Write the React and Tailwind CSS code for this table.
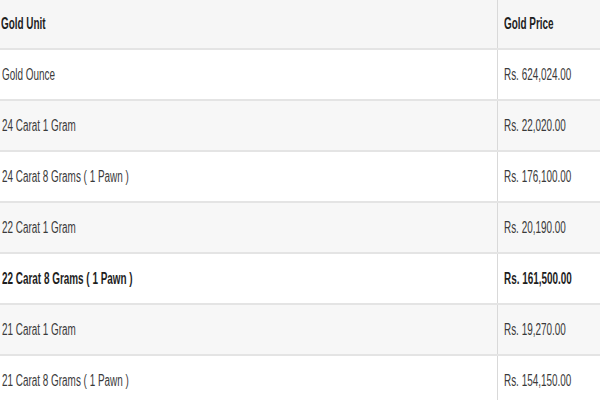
import React from "react";

const rows = [
  { unit: "Gold Ounce", price: "Rs. 624,024.00", bg: "bg-white" },
  { unit: "24 Carat 1 Gram", price: "Rs. 22,020.00", bg: "bg-[#f7f7f7]" },
  { unit: "24 Carat 8 Grams ( 1 Pawn )", price: "Rs. 176,100.00", bg: "bg-white" },
  { unit: "22 Carat 1 Gram", price: "Rs. 20,190.00", bg: "bg-[#f7f7f7]" },
  { unit: "22 Carat 8 Grams ( 1 Pawn )", price: "Rs. 161,500.00", bg: "bg-white", bold: true },
  { unit: "21 Carat 1 Gram", price: "Rs. 19,270.00", bg: "bg-[#f7f7f7]" },
  { unit: "21 Carat 8 Grams ( 1 Pawn )", price: "Rs. 154,150.00", bg: "bg-white" },
];

function T({ children, bold }) {
  return (
    <span
      className={
        "inline-block whitespace-nowrap origin-left scale-x-[0.62] text-[16px] leading-none " +
        (bold ? "font-bold text-[#1e1e1e]" : "font-normal text-[#3a3a3a]")
      }
    >
      {children}
    </span>
  );
}

export default function App() {
  return (
    <div className="w-[600px] h-[400px] overflow-hidden bg-white font-['Liberation_Sans',Arial,sans-serif]">
      <div className="flex h-[50px] bg-[#f6f6f6] border-b-2 border-[#e4e4e4]">
        <div className="w-[497px] shrink-0 flex items-center pl-[1px]">
          <T bold>Gold Unit</T>
        </div>
        <div className="flex-1 min-w-0 overflow-hidden flex items-center pl-[6px] border-l border-[#d9d9d9]">
          <T bold>Gold Price</T>
        </div>
      </div>
      {rows.map((r) => (
        <div key={r.unit} className={"flex h-[51px] border-b-2 border-[#e4e4e4] " + r.bg}>
          <div className="w-[497px] shrink-0 flex items-center pl-[2px]">
            <T bold={r.bold}>{r.unit}</T>
          </div>
          <div className="flex-1 min-w-0 overflow-hidden flex items-center pl-[6px] border-l border-[#d9d9d9]">
            <T bold={r.bold}>{r.price}</T>
          </div>
        </div>
      ))}
    </div>
  );
}
